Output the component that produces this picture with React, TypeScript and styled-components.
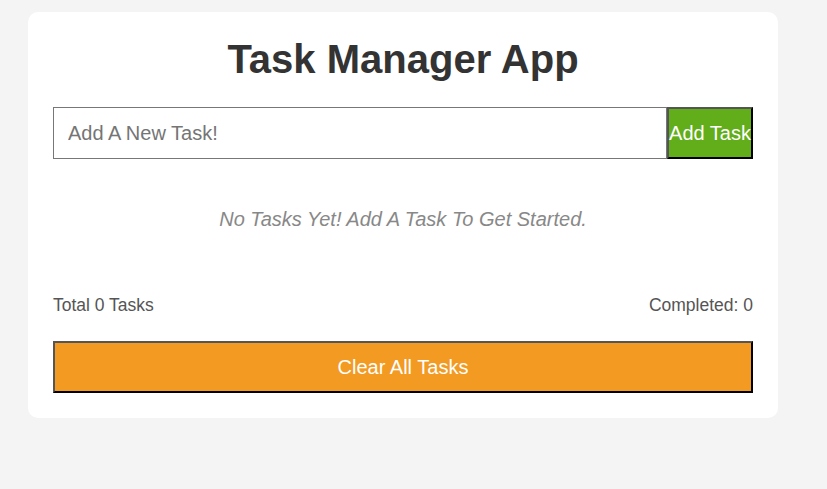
import React, { useState } from "react";
import styled, { createGlobalStyle } from "styled-components";

const GlobalStyle = createGlobalStyle`
  html, body {
    margin: 0;
    padding: 0;
    background: #f4f4f4;
    font-family: "Liberation Sans", Arial, sans-serif;
  }
`;

const Page = styled.div`
  padding: 12px 28px;
`;

const Card = styled.div`
  width: 750px;
  box-sizing: border-box;
  background: #ffffff;
  border-radius: 10px;
  padding: 25px;
`;

const Title = styled.h1`
  margin: 0 0 25px;
  text-align: center;
  font-size: 40px;
  font-weight: bold;
  color: #333333;
`;

const Form = styled.form`
  display: flex;
  height: 52px;
`;

const TaskInput = styled.input`
  flex: 1;
  min-width: 0;
  box-sizing: border-box;
  height: 52px;
  margin: 0;
  padding: 0 14px;
  border: 1px solid #777777;
  font-family: "Liberation Sans", Arial, sans-serif;
  font-size: 20px;
  color: #333;
  outline: none;
  &::placeholder {
    color: #757575;
  }
`;

const ActionButton = styled.button<{ $bg: string; $full?: boolean }>`
  box-sizing: border-box;
  height: 52px;
  width: ${(p) => (p.$full ? "100%" : "86px")};
  margin: 0;
  padding: 0;
  background: ${(p) => p.$bg};
  color: #ffffff;
  font-family: "Liberation Sans", Arial, sans-serif;
  font-size: 20px;
  border-style: solid;
  border-width: 2px;
  border-color: #555555 #000000 #000000 #555555;
  white-space: nowrap;
  cursor: pointer;
  display: flex;
  align-items: center;
  justify-content: center;
`;

const EmptyMessage = styled.p`
  margin: 0;
  padding: 49px 0 0;
  text-align: center;
  font-style: italic;
  font-size: 20px;
  color: #888888;
`;

const Stats = styled.div`
  display: flex;
  justify-content: space-between;
  margin-top: 64px;
  font-size: 17.5px;
  line-height: 20px;
  color: #555555;
`;

const ClearRow = styled.div`
  margin-top: 26px;
`;

export default function App() {
  const [text, setText] = useState("");
  return (
    <>
      <GlobalStyle />
      <Page>
        <Card>
          <Title>Task Manager App</Title>
          <Form onSubmit={(e) => e.preventDefault()}>
            <TaskInput
              placeholder="Add A New Task!"
              value={text}
              onChange={(e) => setText(e.target.value)}
            />
            <ActionButton type="submit" $bg="#62ad1a">
              Add Task
            </ActionButton>
          </Form>
          <EmptyMessage>No Tasks Yet! Add A Task To Get Started.</EmptyMessage>
          <Stats>
            <span>Total 0 Tasks</span>
            <span>Completed: 0</span>
          </Stats>
          <ClearRow>
            <ActionButton type="button" $bg="#f29a22" $full>
              Clear All Tasks
            </ActionButton>
          </ClearRow>
        </Card>
      </Page>
    </>
  );
}
